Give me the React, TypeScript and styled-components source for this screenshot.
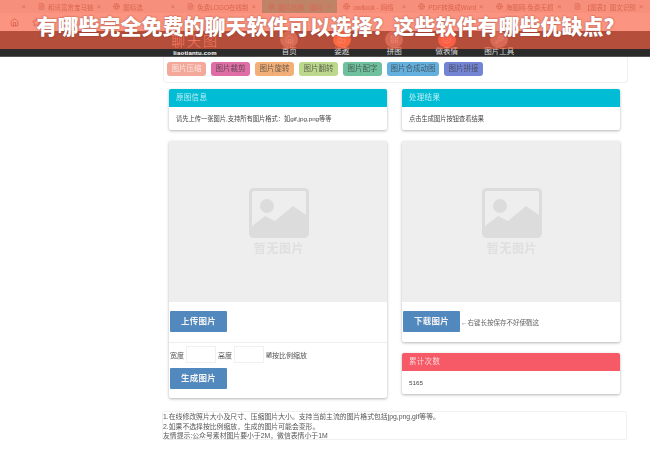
import React from "react";
import styled, { createGlobalStyle } from "styled-components";
import { FileText, Globe, Home, Image as ImageIcon, LayoutGrid, Smile, Star, Wrench } from "lucide-react";

const GlobalStyle = createGlobalStyle`
  html, body {
    margin: 0;
    padding: 0;
    background: #fff;
  }
  * {
    box-sizing: border-box;
  }
`;

const font = `"Liberation Sans", "Noto Sans CJK SC", sans-serif`;

const Page = styled.div`
  position: relative;
  width: 650px;
  height: 450px;
  overflow: hidden;
  background: #fff;
  font-family: ${font};
  color: #444;
`;

const TitleBand = styled.div`
  position: absolute;
  top: 0;
  left: 0;
  width: 100%;
  height: 49px;
  background: rgba(255, 98, 69, 0.65);
  display: flex;
  justify-content: center;
  padding: 12px 0 0 11px;
`;

const TitleText = styled.div`
  font-size: 21px;
  line-height: 30px;
  font-weight: 900;
  color: #fff;
  white-space: nowrap;
  text-shadow: 0 0 2px rgba(120, 40, 30, 0.7);
`;

const TabStrip = styled.div`
  height: 13px;
  background: #e6e2df;
  display: flex;
  overflow: hidden;
  filter: blur(0.4px);
`;

const Tab = styled.div<{ $w: number; $active?: boolean }>`
  flex: 0 0 ${(p) => p.$w}px;
  display: flex;
  align-items: center;
  gap: 3px;
  padding: 0 6px 0 6px;
  font-size: 6.5px;
  color: #9a6a60;
  white-space: nowrap;
  background: ${(p) => (p.$active ? "#48c0a8" : "transparent")};
  svg {
    flex: none;
  }
`;

const TabName = styled.span`
  flex: 1;
  overflow: hidden;
`;

const TabClose = styled.span`
  font-size: 8px;
  color: #a87a70;
`;

const Toolbar = styled.div`
  height: 18px;
  background: #f2efed;
  display: flex;
  align-items: center;
  gap: 13px;
  padding-left: 10px;
  color: #8a4a3e;
`;

const SiteHeader = styled.div`
  height: 26px;
  background: #2b2b2b;
  border-bottom: 1px solid #555;
  display: flex;
  padding-left: 150px;
`;

const Logo = styled.div`
  width: 90px;
  display: flex;
  flex-direction: column;
  align-items: center;
  color: #fff;
  padding-top: 4px;
`;

const LogoMark = styled.div`
  font-family: "Liberation Serif", "Noto Sans CJK SC", serif;
  font-size: 14px;
  line-height: 14px;
  letter-spacing: 2px;
  color: #e9a796;
  font-weight: 300;
`;

const LogoUrl = styled.div`
  font-size: 6px;
  line-height: 8px;
  font-weight: 700;
  letter-spacing: 0.2px;
`;

const Nav = styled.div`
  display: flex;
  margin-left: 23px;
`;

const NavItem = styled.div`
  width: 52.5px;
  display: flex;
  flex-direction: column;
  align-items: center;
  font-size: 7.5px;
  line-height: 8px;
  color: #d8d8d8;
`;

const NavIcon = styled.div<{ $color: string }>`
  width: 18px;
  height: 18px;
  border-radius: 50%;
  background: ${(p) => p.$color};
  display: flex;
  align-items: center;
  justify-content: center;
  color: rgba(255, 255, 255, 0.55);
`;

const Content = styled.div`
  padding-left: 163px;
  width: 628px;
  filter: blur(0.3px);
`;

const ToolCard = styled.div`
  height: 26px;
  border: 1px solid #f0f0f0;
  border-top: 0;
  border-radius: 0 0 4px 4px;
  display: flex;
  gap: 5px;
  padding: 5px 0 0 3px;
`;

const ToolButton = styled.div<{ $color: string; $w: number; $light?: boolean }>`
  width: ${(p) => p.$w}px;
  height: 14px;
  border-radius: 3px;
  background: ${(p) => p.$color};
  font-size: 7.5px;
  line-height: 14px;
  text-align: center;
  color: ${(p) => (p.$light ? "rgba(255, 255, 255, 0.7)" : "rgba(60, 60, 60, 0.75)")};
`;

const Columns = styled.div`
  display: grid;
  grid-template-columns: 218px 218px;
  column-gap: 15px;
  padding: 6px 0 0 6px;
`;

const Column = styled.div`
  display: flex;
  flex-direction: column;
  gap: 11px;
`;

const Panel = styled.div`
  background: #fff;
  border-radius: 2px;
  box-shadow: 0 1px 3px rgba(0, 0, 0, 0.3);
`;

const PanelHead = styled.div<{ $color: string }>`
  height: 18px;
  background: ${(p) => p.$color};
  color: rgba(255, 255, 255, 0.75);
  font-size: 7.5px;
  line-height: 18px;
  padding-left: 7px;
  border-radius: 2px 2px 0 0;
  letter-spacing: 0.3px;
`;

const PanelBody = styled.div`
  height: 23px;
  font-size: 6.25px;
  line-height: 23px;
  padding-left: 7px;
  color: #444;
  white-space: nowrap;
`;

const Placeholder = styled.div`
  height: 161px;
  background: #eeeeee;
  display: flex;
  flex-direction: column;
  align-items: center;
  padding: 47px 0 0 2px;
  color: #dcdcdc;
`;

const PlaceholderText = styled.div`
  font-size: 12px;
  line-height: 14px;
  margin-top: 4px;
  font-weight: 700;
  letter-spacing: 0.6px;
  color: #dfdfdf;
`;

const ButtonRow = styled.div`
  display: flex;
  align-items: center;
  gap: 1px;
  padding: 9px 0 10px 1px;
  font-size: 6.5px;
  color: #666;
`;

const BlueButton = styled.div`
  width: 57px;
  height: 21px;
  background: #5189bf;
  border-radius: 1px;
  color: #f2f2f2;
  font-size: 8.5px;
  font-weight: 700;
  line-height: 21px;
  text-align: center;
  letter-spacing: 0.3px;
`;

const SizeForm = styled.div`
  border-top: 1px solid #eee;
  padding: 3px 0 9px 1px;
  display: flex;
  flex-direction: column;
  gap: 5px;
`;

const SizeRow = styled.div`
  display: flex;
  align-items: center;
  font-size: 7px;
  color: #555;
  height: 17px;
`;

const SizeInput = styled.div`
  width: 30px;
  height: 17px;
  margin: 0 2px 0 2px;
  border: 1px solid #f0f0f0;
`;

const CheckMark = styled.span`
  width: 6px;
  height: 6px;
  background: #bbb;
  border-radius: 1px;
  display: inline-flex;
  align-items: center;
  justify-content: center;
  font-size: 6px;
  color: #333;
`;

const Notes = styled.div`
  width: 465px;
  height: 29px;
  margin: 13px 0 0 -1px;
  border: 1px solid #f0f0f0;
  border-radius: 2px;
  font-size: 6.85px;
  line-height: 9.6px;
  color: #555;
  white-space: nowrap;
`;

const tabs = [
  { w: 32, name: "" },
  { w: 74, name: "和讯富贵宝马链", icon: "doc" },
  { w: 74, name: "图标选", icon: "globe" },
  { w: 76, name: "免费LOGO在线制", icon: "doc" },
  { w: 75, name: "图片比例 · 图片", icon: "doc", active: true },
  { w: 75, name: "owllook - 网络", icon: "globe" },
  { w: 75, name: "PDF转换成Word", icon: "globe" },
  { w: 78, name: "海图网-免费无损", icon: "globe" },
  { w: 70, name: "【图表】图文识别", icon: "doc" },
  { w: 21, name: "", icon: "doc" },
];

const tools = [
  { name: "图片压缩", color: "#f3a89a", w: 39, light: true },
  { name: "图片裁剪", color: "#df6ea6", w: 39 },
  { name: "图片旋转", color: "#f2b078", w: 39 },
  { name: "图片翻转", color: "#bcd88c", w: 39 },
  { name: "图片配字", color: "#6fc09c", w: 39 },
  { name: "图片合成动图", color: "#63b0de", w: 52 },
  { name: "图片拼接", color: "#7484d4", w: 39 },
];

const navItems = [
  { name: "首页", color: "#8f7a6e", Icon: Home },
  { name: "姿遨", color: "#f47a3c", Icon: ImageIcon },
  { name: "拼图", color: "#8f7a74", Icon: LayoutGrid },
  { name: "做表情", color: "#f05a48", Icon: Smile },
  { name: "图片工具", color: "#8f7a74", Icon: Wrench },
];

function NoImage() {
  return (
    <Placeholder>
      <svg width="60" height="50" viewBox="0 0 60 50">
        <rect x="1.5" y="1.5" width="57" height="47" rx="3" fill="none" stroke="#dcdcdc" strokeWidth="3" />
        <circle cx="18" cy="18" r="7" fill="#dcdcdc" />
        <path d="M3 38 L16 28 L26 33 L44 18 L57 27 V47 H3 Z" fill="#dcdcdc" />
      </svg>
      <PlaceholderText>暂无图片</PlaceholderText>
    </Placeholder>
  );
}

export default function App() {
  return (
    <Page>
      <GlobalStyle />
      <TabStrip>
        {tabs.map((t, i) => (
          <Tab key={i} $w={t.w} $active={t.active}>
            {t.icon === "doc" && <FileText size={7} />}
            {t.icon === "globe" && <Globe size={7} />}
            <TabName>{t.name}</TabName>
            {t.w > 30 && <TabClose>×</TabClose>}
          </Tab>
        ))}
      </TabStrip>
      <Toolbar>
        <Home size={9} />
        <Star size={9} />
      </Toolbar>
      <SiteHeader>
        <Logo>
          <LogoMark>聊天图</LogoMark>
          <LogoUrl>liaotiantu.com</LogoUrl>
        </Logo>
        <Nav>
          {navItems.map(({ name, color, Icon }) => (
            <NavItem key={name}>
              <NavIcon $color={color}>
                <Icon size={9} />
              </NavIcon>
              {name}
            </NavItem>
          ))}
        </Nav>
      </SiteHeader>
      <Content>
        <ToolCard>
          {tools.map((t) => (
            <ToolButton key={t.name} $color={t.color} $w={t.w} $light={t.light}>
              {t.name}
            </ToolButton>
          ))}
        </ToolCard>
        <Columns>
          <Column>
            <Panel>
              <PanelHead $color="#00bcd4">原图信息</PanelHead>
              <PanelBody>请先上传一张图片,支持所有图片格式：如gif,jpg,png等等</PanelBody>
            </Panel>
            <Panel>
              <NoImage />
              <ButtonRow>
                <BlueButton>上传图片</BlueButton>
              </ButtonRow>
              <SizeForm>
                <SizeRow>
                  宽度
                  <SizeInput />
                  高度
                  <SizeInput />
                  <CheckMark>✓</CheckMark>
                  按比例缩放
                </SizeRow>
                <BlueButton>生成图片</BlueButton>
              </SizeForm>
            </Panel>
          </Column>
          <Column>
            <Panel>
              <PanelHead $color="#00bcd4">处理结果</PanelHead>
              <PanelBody>点击生成图片按钮查看结果</PanelBody>
            </Panel>
            <Panel>
              <NoImage />
              <ButtonRow>
                <BlueButton>下载图片</BlueButton>
                ←右键长按保存不好使戳这
              </ButtonRow>
            </Panel>
            <Panel>
              <PanelHead $color="#f55a66">累计次数</PanelHead>
              <PanelBody>5165</PanelBody>
            </Panel>
          </Column>
        </Columns>
        <Notes>
          1.在线修改照片大小及尺寸、压缩图片大小。支持当前主流的图片格式包括jpg,png,gif等等。
          <br />
          2.如果不选择按比例缩放，生成的图片可能会变形。
          <br />
          友情提示:公众号素材图片要小于2M，微信表情小于1M
        </Notes>
      </Content>
      <TitleBand>
        <TitleText>有哪些完全免费的聊天软件可以选择？这些软件有哪些优缺点？</TitleText>
      </TitleBand>
    </Page>
  );
}
